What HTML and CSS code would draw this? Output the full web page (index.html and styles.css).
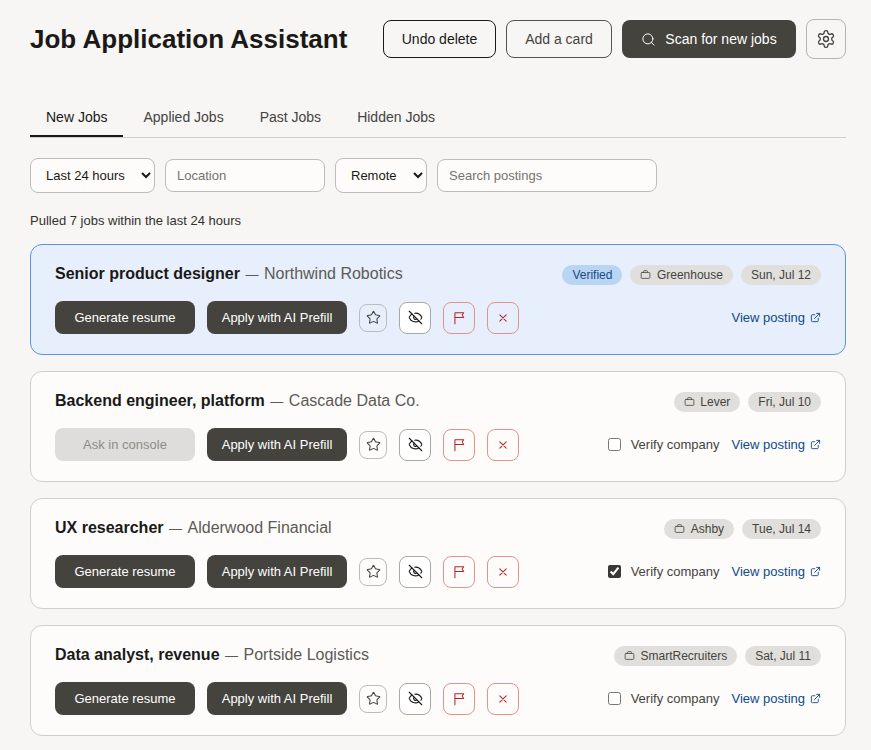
FILE: index.html
```html
<!DOCTYPE html>
<html lang="en">
  <head>
    <meta charset="UTF-8" />
    <meta name="viewport" content="width=device-width, initial-scale=1.0" />
    <title>Job Application Assistant</title>
    <link rel="stylesheet" href="styles.css">
  </head>
  <body>
    <svg class="sprites" width="0" height="0" aria-hidden="true">
      <symbol id="i-star" viewBox="0 0 24 24"><path d="M11.525 2.295a.53.53 0 0 1 .95 0l2.31 4.679a2.123 2.123 0 0 0 1.595 1.16l5.166.756a.53.53 0 0 1 .294.904l-3.736 3.638a2.123 2.123 0 0 0-.611 1.878l.882 5.14a.53.53 0 0 1-.771.56l-4.618-2.428a2.122 2.122 0 0 0-1.973 0L6.396 21.01a.53.53 0 0 1-.77-.56l.881-5.139a2.122 2.122 0 0 0-.611-1.879L2.16 9.795a.53.53 0 0 1 .294-.906l5.165-.755a2.122 2.122 0 0 0 1.597-1.16z"/></symbol>
      <symbol id="i-eye-off" viewBox="0 0 24 24"><path d="M10.733 5.076a10.744 10.744 0 0 1 11.205 6.575 1 1 0 0 1 0 .696 10.747 10.747 0 0 1-1.444 2.49"/><path d="M14.084 14.158a3 3 0 0 1-4.242-4.242"/><path d="M17.479 17.499a10.75 10.75 0 0 1-15.417-5.151 1 1 0 0 1 0-.696 10.75 10.75 0 0 1 4.446-5.143"/><path d="M2 2l20 20"/></symbol>
      <symbol id="i-flag" viewBox="0 0 24 24"><path d="M5 22V3h15l-2.500 4 2.500 4H5"/></symbol>
      <symbol id="i-x" viewBox="0 0 24 24"><path d="M6.500 6.500l11 11M17.500 6.500l-11 11"/></symbol>
      <symbol id="i-case" viewBox="0 0 24 24"><rect x="2.500" y="7.500" width="19" height="13" rx="2"/><path d="M8 7.500V5a1.500 1.500 0 0 1 1.500-1.500h5A1.500 1.500 0 0 1 16 5v2.500"/></symbol>
      <symbol id="i-out" viewBox="0 0 24 24"><path d="M18 13.500V19a2 2 0 0 1-2 2H5a2 2 0 0 1-2-2V8a2 2 0 0 1 2-2h5.500M14.500 3H21v6.500M10 14L21 3"/></symbol>
    </svg>

    <main class="app">
      <header class="top">
        <h1 class="title">Job Application Assistant</h1>
        <div class="top-actions">
          <button class="btn btn-outline btn-strong">Undo delete</button>
          <button class="btn btn-outline">Add a card</button>
          <button class="btn btn-dark btn-scan">
            <svg class="scan-icon" viewBox="0 0 24 24"><circle cx="11" cy="11" r="8"/><path d="M21 21l-4.300-4.300"/></svg>
            Scan for new jobs
          </button>
          <button class="btn-gear" aria-label="Settings">
            <svg viewBox="0 0 24 24"><path d="M12.220 2h-.44a2 2 0 0 0-2 2v.18a2 2 0 0 1-1 1.730l-.43.25a2 2 0 0 1-2 0l-.15-.08a2 2 0 0 0-2.730.73l-.22.38a2 2 0 0 0 .73 2.730l.15.1a2 2 0 0 1 1 1.720v.51a2 2 0 0 1-1 1.740l-.15.09a2 2 0 0 0-.73 2.730l.22.38a2 2 0 0 0 2.730.73l.15-.08a2 2 0 0 1 2 0l.43.25a2 2 0 0 1 1 1.730V20a2 2 0 0 0 2 2h.44a2 2 0 0 0 2-2v-.18a2 2 0 0 1 1-1.730l.43-.25a2 2 0 0 1 2 0l.15.08a2 2 0 0 0 2.730-.73l.22-.39a2 2 0 0 0-.73-2.730l-.15-.08a2 2 0 0 1-1-1.740v-.5a2 2 0 0 1 1-1.740l.15-.09a2 2 0 0 0 .73-2.730l-.22-.38a2 2 0 0 0-2.730-.73l-.15.08a2 2 0 0 1-2 0l-.43-.25a2 2 0 0 1-1-1.730V4a2 2 0 0 0-2-2z"/><circle cx="12" cy="12" r="3"/></svg>
          </button>
        </div>
      </header>

      <nav class="tabs">
        <a class="tab active">New Jobs</a>
        <a class="tab">Applied Jobs</a>
        <a class="tab">Past Jobs</a>
        <a class="tab">Hidden Jobs</a>
      </nav>

      <div class="filters">
        <select class="select select-time"><option>Last 24 hours</option></select>
        <input class="input input-location" placeholder="Location" />
        <select class="select select-remote"><option>Remote</option></select>
        <input class="input input-search" placeholder="Search postings" />
      </div>

      <p class="summary">Pulled 7 jobs within the last 24 hours</p>

      <section class="cards">
        <article class="card selected">
          <div class="card-row">
            <h2 class="job"><strong>Senior product designer</strong><span class="dash">—</span><span class="company">Northwind Robotics</span></h2>
            <div class="tags">
              <span class="tag tag-blue">Verified</span>
              <span class="tag"><svg class="ico-sm"><use href="#i-case"/></svg>Greenhouse</span>
              <span class="tag">Sun, Jul 12</span>
            </div>
          </div>
          <div class="card-row actions">
            <button class="btn-card">Generate resume</button>
            <button class="btn-card">Apply with AI Prefill</button>
            <button class="icon-btn small"><svg><use href="#i-star"/></svg></button>
            <button class="icon-btn white"><svg><use href="#i-eye-off"/></svg></button>
            <button class="icon-btn red"><svg><use href="#i-flag"/></svg></button>
            <button class="icon-btn red"><svg><use href="#i-x"/></svg></button>
            <div class="card-end">
              <a class="view">View posting <svg class="ico-out"><use href="#i-out"/></svg></a>
            </div>
          </div>
        </article>

        <article class="card">
          <div class="card-row">
            <h2 class="job"><strong>Backend engineer, platform</strong><span class="dash">—</span><span class="company">Cascade Data Co.</span></h2>
            <div class="tags">
              <span class="tag"><svg class="ico-sm"><use href="#i-case"/></svg>Lever</span>
              <span class="tag">Fri, Jul 10</span>
            </div>
          </div>
          <div class="card-row actions">
            <button class="btn-card off">Ask in console</button>
            <button class="btn-card">Apply with AI Prefill</button>
            <button class="icon-btn small"><svg><use href="#i-star"/></svg></button>
            <button class="icon-btn white"><svg><use href="#i-eye-off"/></svg></button>
            <button class="icon-btn red"><svg><use href="#i-flag"/></svg></button>
            <button class="icon-btn red"><svg><use href="#i-x"/></svg></button>
            <div class="card-end">
              <label class="verify"><input type="checkbox" />Verify company</label>
              <a class="view">View posting <svg class="ico-out"><use href="#i-out"/></svg></a>
            </div>
          </div>
        </article>

        <article class="card">
          <div class="card-row">
            <h2 class="job"><strong>UX researcher</strong><span class="dash">—</span><span class="company">Alderwood Financial</span></h2>
            <div class="tags">
              <span class="tag"><svg class="ico-sm"><use href="#i-case"/></svg>Ashby</span>
              <span class="tag">Tue, Jul 14</span>
            </div>
          </div>
          <div class="card-row actions">
            <button class="btn-card">Generate resume</button>
            <button class="btn-card">Apply with AI Prefill</button>
            <button class="icon-btn small"><svg><use href="#i-star"/></svg></button>
            <button class="icon-btn white"><svg><use href="#i-eye-off"/></svg></button>
            <button class="icon-btn red"><svg><use href="#i-flag"/></svg></button>
            <button class="icon-btn red"><svg><use href="#i-x"/></svg></button>
            <div class="card-end">
              <label class="verify"><input type="checkbox" checked />Verify company</label>
              <a class="view">View posting <svg class="ico-out"><use href="#i-out"/></svg></a>
            </div>
          </div>
        </article>

        <article class="card">
          <div class="card-row">
            <h2 class="job"><strong>Data analyst, revenue</strong><span class="dash">—</span><span class="company">Portside Logistics</span></h2>
            <div class="tags">
              <span class="tag"><svg class="ico-sm"><use href="#i-case"/></svg>SmartRecruiters</span>
              <span class="tag">Sat, Jul 11</span>
            </div>
          </div>
          <div class="card-row actions">
            <button class="btn-card">Generate resume</button>
            <button class="btn-card">Apply with AI Prefill</button>
            <button class="icon-btn small"><svg><use href="#i-star"/></svg></button>
            <button class="icon-btn white"><svg><use href="#i-eye-off"/></svg></button>
            <button class="icon-btn red"><svg><use href="#i-flag"/></svg></button>
            <button class="icon-btn red"><svg><use href="#i-x"/></svg></button>
            <div class="card-end">
              <label class="verify"><input type="checkbox" />Verify company</label>
              <a class="view">View posting <svg class="ico-out"><use href="#i-out"/></svg></a>
            </div>
          </div>
        </article>
      </section>
    </main>
  </body>
</html>
```

FILE: styles.css
```css
:root {
  --bg: #f7f6f4;
  --card: #fdfcfb;
  --ink: #1a1917;
  --dark: #45433e;
  --text: #45433e;
  --line: #d0cfcb;
  --tag: #e0dfdb;
  --red: #b3262b;
  --blue: #0f4a8a;
}

* {
  margin: 0;
  padding: 0;
  box-sizing: border-box;
  font-family: "Liberation Sans", Arial, sans-serif;
}

html,
body {
  height: 750px;
  overflow: hidden;
}

body {
  background: var(--bg);
  color: var(--ink);
}

.sprites {
  position: absolute;
}

svg {
  fill: none;
  stroke: currentColor;
  stroke-linecap: round;
  stroke-linejoin: round;
}

.app {
  width: 816px;
  margin-left: 30px;
  padding-top: 19px;
}

.top {
  display: flex;
  align-items: center;
  justify-content: space-between;
  height: 40px;
}

.title {
  font-size: 26px;
  font-weight: 700;
  line-height: 40px;
}

.top-actions {
  display: flex;
  align-items: center;
  gap: 10px;
}

.btn {
  height: 38px;
  border-radius: 8px;
  font-size: 14px;
  background: none;
  display: flex;
  align-items: center;
  justify-content: center;
}

.btn-outline {
  border: 1px solid #55534e;
  color: var(--text);
  width: 106px;
}

.btn-strong {
  border-color: var(--ink);
  color: var(--ink);
  width: 113px;
}

.btn-dark {
  background: var(--dark);
  color: #fff;
  border: none;
}

.btn-scan {
  width: 174px;
  gap: 9px;
}

.scan-icon {
  width: 15px;
  height: 15px;
  stroke-width: 1.6;
}

.btn-gear {
  width: 40px;
  height: 40px;
  border: 1px solid #b5b4b0;
  border-radius: 8px;
  background: none;
  color: var(--text);
  display: flex;
  align-items: center;
  justify-content: center;
}

.btn-gear svg {
  width: 20px;
  height: 20px;
  stroke-width: 1.6;
}

.tabs {
  display: flex;
  gap: 4px;
  margin-top: 37px;
  border-bottom: 1px solid var(--line);
  height: 42px;
}

.tab {
  padding: 0 16px;
  font-size: 14px;
  line-height: 42px;
  color: var(--text);
  height: 41px;
}

.tab.active {
  color: var(--ink);
  border-bottom: 2px solid var(--ink);
}

.filters {
  display: flex;
  align-items: center;
  gap: 10px;
  margin-top: 20px;
}

.select {
  height: 35px;
  border: 1px solid #bdbcb8;
  border-radius: 8px;
  background: var(--card);
  font-size: 13px;
  color: var(--ink);
  padding: 0 11px;
}

.select-time {
  width: 125px;
}

.select-remote {
  width: 92px;
}

.input {
  height: 33px;
  border: 1px solid #bdbcb8;
  border-radius: 8px;
  background: var(--card);
  font-size: 13px;
  padding: 0 11px;
}

.input::placeholder {
  color: #75736e;
}

.input-location {
  width: 160px;
}

.input-search {
  width: 220px;
}

.summary {
  font-size: 13px;
  line-height: 16px;
  margin-top: 20px;
  color: #33312e;
}

.cards {
  display: flex;
  flex-direction: column;
  gap: 16px;
  margin-top: 15px;
}

.card {
  height: 111px;
  padding: 16px 24px;
  background: var(--card);
  border: 1px solid var(--line);
  border-radius: 12px;
}

.card.selected {
  background: #e7effc;
  border-color: #5b93e0;
}

.card-row {
  display: flex;
  align-items: center;
  justify-content: space-between;
}

.job {
  font-size: 16px;
  font-weight: 400;
  line-height: 26px;
}

.job strong {
  font-weight: 700;
}

.dash {
  display: inline-block;
  margin: 0 5.5px;
  font-size: 13px;
  color: #5c5a55;
}

.company {
  color: #5c5a55;
}

.tags {
  display: flex;
  gap: 8px;
}

.tag {
  display: flex;
  align-items: center;
  gap: 5.5px;
  height: 20px;
  padding: 0 10px;
  border-radius: 10px;
  background: var(--tag);
  font-size: 12px;
  color: var(--text);
}

.tag-blue {
  background: #b8d5f4;
  color: #1c4a85;
}

.ico-sm {
  width: 11px;
  height: 11px;
  stroke-width: 1.7;
}

.actions {
  justify-content: flex-start;
  gap: 12px;
  margin-top: 13px;
}

.btn-card {
  width: 140px;
  height: 33px;
  border: none;
  border-radius: 8px;
  background: var(--dark);
  color: #fff;
  font-size: 13px;
}

.btn-card.off {
  background: #dedddb;
  color: #8c8b87;
}

.icon-btn {
  width: 32px;
  height: 32px;
  border: 1px solid #a9a8a4;
  border-radius: 8px;
  background: none;
  color: var(--ink);
  display: flex;
  align-items: center;
  justify-content: center;
}

.icon-btn svg {
  width: 15px;
  height: 15px;
  stroke-width: 1.7;
}

.icon-btn.small {
  width: 28px;
  height: 28px;
  border-color: #bdbcb8;
  color: var(--text);
}

.icon-btn.white {
  background: #fff;
}

.icon-btn.red {
  border-color: #e4928e;
  color: var(--red);
}

.icon-btn.red svg {
  width: 14px;
  height: 14px;
  stroke-width: 1.8;
}

.card-end {
  margin-left: auto;
  display: flex;
  align-items: center;
  gap: 12px;
}

.verify {
  display: flex;
  align-items: center;
  gap: 9.5px;
  font-size: 13px;
  color: var(--text);
}

.verify input {
  width: 13px;
  height: 13px;
  accent-color: #3a3835;
}

.view {
  display: flex;
  align-items: center;
  gap: 5px;
  font-size: 13px;
  color: var(--blue);
}

.ico-out {
  width: 11px;
  height: 11px;
  stroke-width: 2;
}
```
